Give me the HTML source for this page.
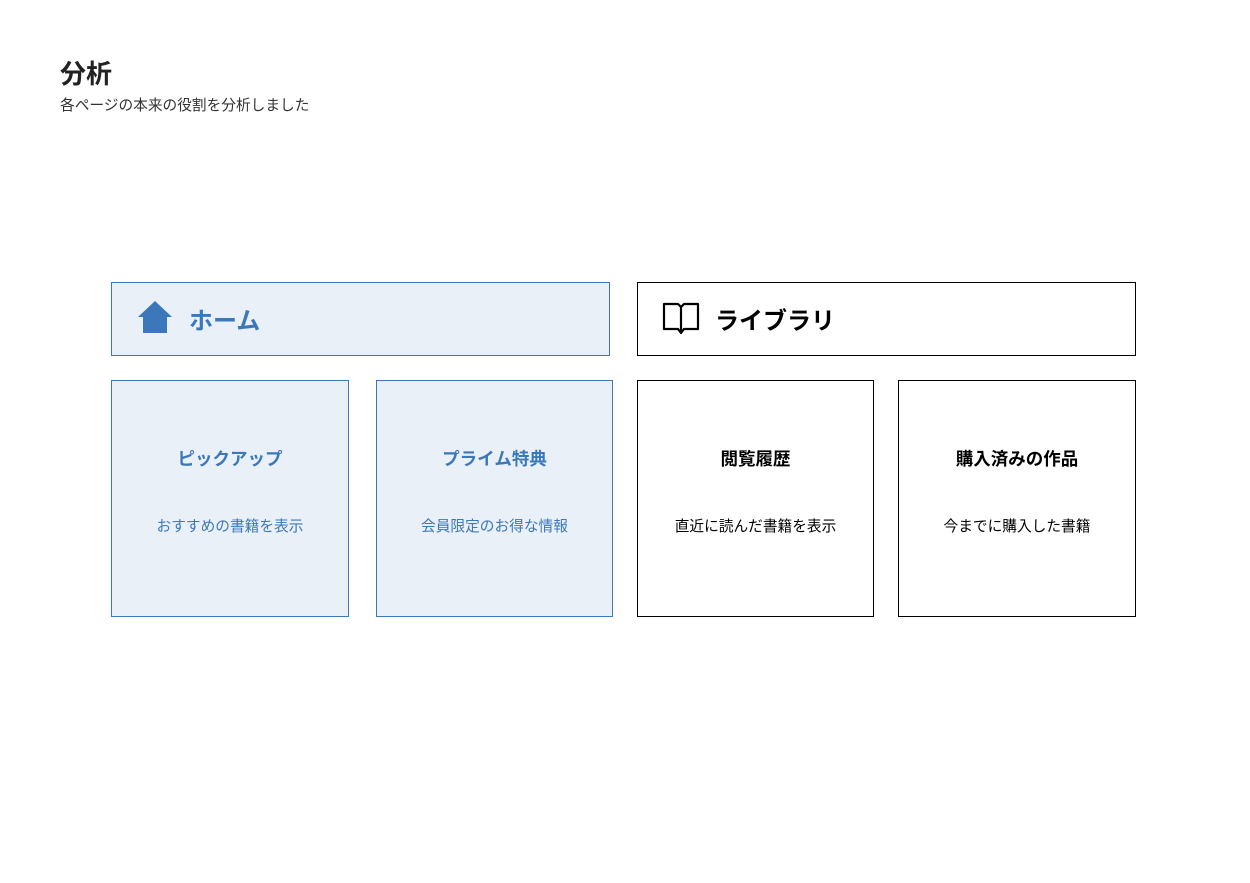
<!DOCTYPE html>
<html><head><meta charset="utf-8"><style>
body{margin:0;width:1250px;height:883px;background:#fff;font-family:"Liberation Sans","Noto Sans CJK JP",sans-serif;color:#222;position:relative;overflow:hidden}
.a{position:absolute;box-sizing:border-box}
.b{border:1.5px solid #3c78b9;background:#e9f0f8;color:#3c78b9}
.k{border:1.5px solid #000;background:#fff;color:#000}
.t{position:absolute;left:0;right:0;text-align:center;white-space:nowrap}
</style></head><body>
<div class="a" style="left:60px;top:54px;font-size:26px;font-weight:bold">分析</div>
<div class="a" style="left:60px;top:94px;font-size:14.7px;color:#333">各ページの本来の役割を分析しました</div>

<div class="a b" style="left:111px;top:282px;width:499px;height:74px">
<svg class="a" style="left:25px;top:17px" width="36" height="34" viewBox="0 0 36 34"><path d="M18 1 L35 17 L30 17 L30 33 L6 33 L6 17 L1 17 Z" fill="#3c78b9"/></svg>
<div class="a" style="left:77px;top:18px;font-size:24px;font-weight:bold">ホーム</div></div>

<div class="a k" style="left:637px;top:282px;width:499px;height:74px">
<svg class="a" style="left:24px;top:18px" width="38" height="34" viewBox="0 0 38 34"><path d="M2 3 L2 28 L16 28 L19 32 L22 28 L36 28 L36 3 L22 3 L19 6 L16 3 Z M19 6 L19 31" fill="none" stroke="#000" stroke-width="2.2" stroke-linejoin="round"/></svg>
<div class="a" style="left:77px;top:18px;font-size:24px;font-weight:bold">ライブラリ</div></div>

<div class="a b" style="left:111px;top:380px;width:238px;height:237px"><div class="t" style="top:65px;font-size:17.5px;font-weight:bold">ピックアップ</div><div class="t" style="top:134px;font-size:14.7px">おすすめの書籍を表示</div></div>
<div class="a b" style="left:376px;top:380px;width:237px;height:237px"><div class="t" style="top:65px;font-size:17.5px;font-weight:bold">プライム特典</div><div class="t" style="top:134px;font-size:14.7px">会員限定のお得な情報</div></div>
<div class="a k" style="left:637px;top:380px;width:237px;height:237px"><div class="t" style="top:65px;font-size:17.5px;font-weight:bold">閲覧履歴</div><div class="t" style="top:134px;font-size:14.7px">直近に読んだ書籍を表示</div></div>
<div class="a k" style="left:898px;top:380px;width:238px;height:237px"><div class="t" style="top:65px;font-size:17.5px;font-weight:bold">購入済みの作品</div><div class="t" style="top:134px;font-size:14.7px">今までに購入した書籍</div></div>
</body></html>
